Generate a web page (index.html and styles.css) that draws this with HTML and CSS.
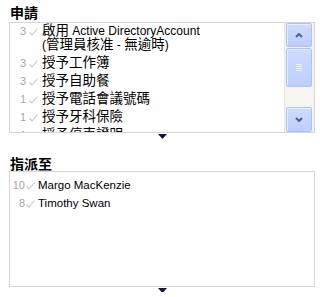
FILE: index.html
```html
<!DOCTYPE html>
<html lang="zh-Hant">
<head>
<meta charset="utf-8">
<title>申請</title>
<link rel="stylesheet" href="styles.css">
</head>
<body>
<section class="panel panel-first">
  <h2 class="title">申請</h2>
  <div class="box box-req">
    <ul class="list list-req">
      <li class="row"><span class="num">3</span><svg class="check" viewBox="0 0 9 8" width="9" height="8"><path d="M0.5 4.5 L3 7 L8.5 0.5"/></svg><span class="label"><span class="zh">啟用</span> Active DirectoryAccount<br>(<span class="zh">管理員核准</span> - <span class="zh">無逾時</span>)</span></li>
      <li class="row"><span class="num">3</span><svg class="check" viewBox="0 0 9 8" width="9" height="8"><path d="M0.5 4.5 L3 7 L8.5 0.5"/></svg><span class="label"><span class="zh">授予工作簿</span></span></li>
      <li class="row"><span class="num">3</span><svg class="check" viewBox="0 0 9 8" width="9" height="8"><path d="M0.5 4.5 L3 7 L8.5 0.5"/></svg><span class="label"><span class="zh">授予自助餐</span></span></li>
      <li class="row"><span class="num">1</span><svg class="check" viewBox="0 0 9 8" width="9" height="8"><path d="M0.5 4.5 L3 7 L8.5 0.5"/></svg><span class="label"><span class="zh">授予電話會議號碼</span></span></li>
      <li class="row"><span class="num">1</span><svg class="check" viewBox="0 0 9 8" width="9" height="8"><path d="M0.5 4.5 L3 7 L8.5 0.5"/></svg><span class="label"><span class="zh">授予牙科保險</span></span></li>
      <li class="row"><span class="num">1</span><svg class="check" viewBox="0 0 9 8" width="9" height="8"><path d="M0.5 4.5 L3 7 L8.5 0.5"/></svg><span class="label"><span class="zh">授予停車證明</span></span></li>
    </ul>
    <div class="scrollbar">
      <div class="sb-btn"><svg viewBox="0 0 8 5" width="8" height="5"><path d="M1 4 L4 1 L7 4"/></svg></div>
      <div class="sb-thumb"><svg viewBox="0 0 6 7" width="6" height="7"><path d="M0 0.5 H6 M0 2.5 H6 M0 4.5 H6 M0 6.5 H6"/></svg></div>
      <div class="sb-track"></div>
      <div class="sb-btn"><svg viewBox="0 0 8 5" width="8" height="5"><path d="M1 1 L4 4 L7 1"/></svg></div>
    </div>
  </div>
  <div class="more"><svg viewBox="0 0 9 5" width="9" height="5"><path d="M0 0 H9 L5 4.5 H4 Z"/></svg></div>
</section>
<section class="panel panel-second">
  <h2 class="title">指派至</h2>
  <div class="box box-assign">
    <ul class="list list-assign">
      <li class="row"><span class="num">10</span><svg class="check" viewBox="0 0 9 8" width="9" height="8"><path d="M0.5 4.5 L3 7 L8.5 0.5"/></svg><span class="label">Margo MacKenzie</span></li>
      <li class="row"><span class="num">8</span><svg class="check" viewBox="0 0 9 8" width="9" height="8"><path d="M0.5 4.5 L3 7 L8.5 0.5"/></svg><span class="label">Timothy Swan</span></li>
    </ul>
  </div>
  <div class="more"><svg viewBox="0 0 9 5" width="9" height="5"><path d="M0 0 H9 L5 4.5 H4 Z"/></svg></div>
</section>
</body>
</html>
```
FILE: styles.css
```css
html, body {
  margin: 0;
  padding: 0;
  background: #ffffff;
}
body {
  font-family: "Liberation Sans", "Noto Sans CJK TC", sans-serif;
  color: #000;
  width: 320px;
}
.panel {
  display: flex;
  flex-direction: column;
}
.panel-second {
  margin-top: 11px;
}
.title {
  margin: 0;
  padding: 4px 0 2px 10px;
  height: 16px;
  font-size: 14px;
  line-height: 16px;
  font-weight: bold;
  font-family: "Noto Sans CJK TC", sans-serif;
}
.panel-second .title {
  padding: 6px 0 0 10px;
}
.box {
  margin-left: 9px;
  width: 304px;
  border: 1px solid #d6d6d6;
  display: flex;
  overflow: hidden;
}
.box-req {
  height: 109px;
}
.box-assign {
  height: 114px;
}
.list {
  list-style: none;
  margin: 0;
  padding: 0;
  flex: 1;
  min-width: 0;
  overflow: hidden;
}
.list-assign {
  padding-top: 4px;
}
.row {
  display: flex;
  align-items: flex-start;
  padding: 2px 0;
  font-size: 12px;
  line-height: 14px;
}
.list-req .row:first-child {
  padding-top: 1px;
  padding-bottom: 1.5px;
}
.num {
  width: 16px;
  text-align: right;
  color: #a6a6a6;
  font-size: 11px;
  flex: none;
}
.check {
  flex: none;
  margin: 4px 4px 0 3px;
  fill: none;
  stroke: #c8c8c8;
  stroke-width: 1.1;
}
.list-assign .row {
  font-size: 11.5px;
}
.list-assign .num {
  width: 15px;
}
.list-assign .check {
  margin: 4px 3px 0 1px;
}
.label {
  white-space: nowrap;
}
.zh {
  font-family: "Noto Sans CJK TC", sans-serif;
  font-size: 13.5px;
  line-height: 10px;
}
.scrollbar {
  flex: none;
  width: 26px;
  border-left: 1px solid #e6e4dc;
  padding: 0 2px 0 1px;
  background: #f6f5ef;
  display: flex;
  flex-direction: column;
}
.sb-btn, .sb-thumb {
  box-sizing: border-box;
  border: 1px solid #adc2f2;
  border-radius: 2px;
  background: linear-gradient(to bottom, #cddcfe, #bccefb);
  box-shadow: inset 1px 1px 0 #e6eeff;
  display: flex;
  align-items: center;
  justify-content: center;
}
.sb-btn {
  height: 24px;
}
.sb-btn:last-child {
  height: 25px;
}
.sb-btn svg {
  fill: none;
  stroke: #4d6185;
  stroke-width: 2;
}
.sb-thumb {
  margin-top: 1px;
  height: 39px;
}
.sb-thumb svg {
  fill: none;
  stroke: #eef3ff;
  stroke-width: 1;
}
.sb-track {
  flex: 1;
}
.more {
  display: flex;
  justify-content: center;
  width: 306px;
  margin-left: 9px;
  padding-top: 1px;
  height: 4px;
  line-height: 0;
}
.more svg {
  fill: #141440;
}
```
